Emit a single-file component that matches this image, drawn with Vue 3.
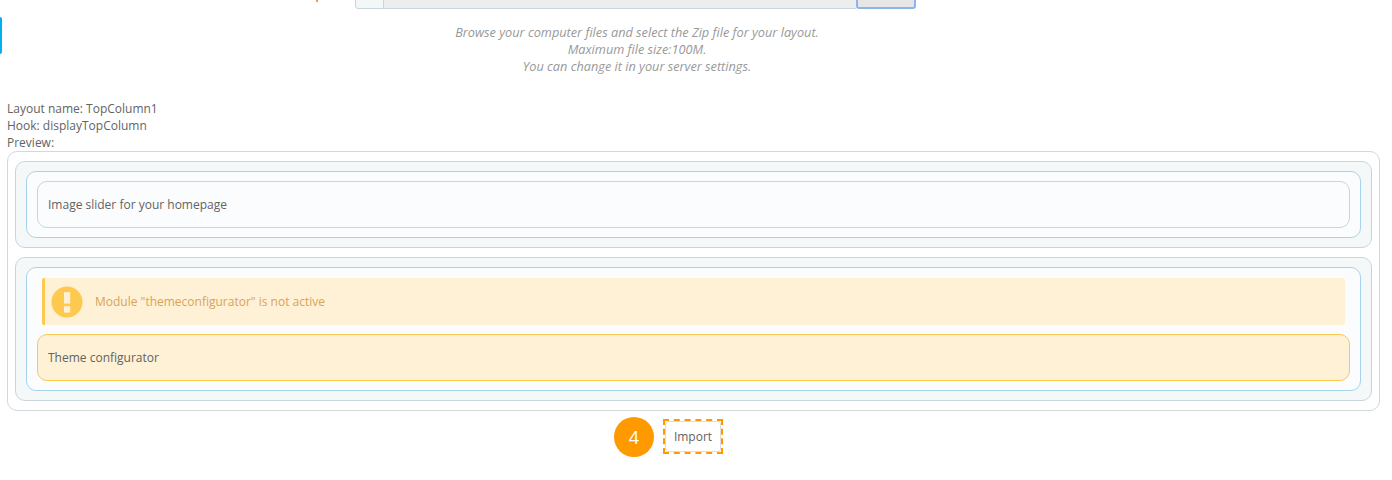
<template>
  <div class="page">
    <i class="side-tab"></i>
    <section class="upload">
      <div class="label-row">
        <span class="mark"></span>
        <div class="input-group">
          <span class="addon"></span>
          <span class="field"><i class="tick tick-a"></i><i class="tick tick-b"></i></span>
          <span class="browse"></span>
        </div>
      </div>
      <p class="help">
        Browse your computer files and select the Zip file for your layout.<br />
        Maximum file size:100M.<br />
        You can change it in your server settings.
      </p>
    </section>

    <section class="layout-info">
      <div>Layout name: TopColumn1</div>
      <div>Hook: displayTopColumn</div>
      <div>Preview:</div>
    </section>

    <section class="preview">
      <div class="hook">
        <div class="column">
          <div class="module">Image slider for your homepage</div>
        </div>
      </div>
      <div class="hook">
        <div class="column">
          <div class="alert">
            <svg class="alert-icon" viewBox="0 0 32 32" aria-hidden="true">
              <circle cx="16" cy="16" r="15.5" fill="#fdc94f" />
              <rect x="13" y="6.2" width="6.2" height="11.4" fill="#fef1d5" />
              <rect x="13" y="20.2" width="6.2" height="6.4" fill="#fef1d5" />
            </svg>
            <span>Module "themeconfigurator" is not active</span>
          </div>
          <div class="module module-warn">Theme configurator</div>
        </div>
      </div>
    </section>

    <section class="actions">
      <span class="step">4</span>
      <span class="import-frame">
        <button class="import" type="button">Import</button>
      </span>
    </section>
  </div>
</template>

<script setup>
</script>

<style>
html, body { margin: 0; background: #fff; overflow: hidden; }
</style>

<style scoped>
.page {
  position: relative;
  height: 480px;
  overflow: hidden;
  font-family: "Open Sans", sans-serif;
  font-size: 12px;
  line-height: 17px;
  color: #636363;
}
.side-tab {
  position: absolute;
  left: 0;
  top: 17px;
  width: 2px;
  height: 37px;
  background: #00aff0;
  border-radius: 0 2px 2px 0;
}
.upload { margin-top: -25px; }
.label-row {
  display: flex;
  height: 34px;
  padding-left: 355px;
  position: relative;
}
.mark {
  position: absolute;
  left: 316px;
  top: 23px;
  width: 2px;
  height: 4px;
  background: #e9a23b;
}
.input-group {
  display: flex;
  width: 561px;
  height: 34px;
  box-sizing: border-box;
}
.addon {
  width: 29px;
  box-sizing: border-box;
  background: #f3f7f8;
  border: 1px solid #c7d6db;
  border-radius: 0 0 0 3px;
}
.field {
  position: relative;
  flex: 1;
  background: #ededed;
  border-bottom: 1px solid #c7d6db;
}
.tick {
  position: absolute;
  top: 23px;
  width: 1px;
  height: 2px;
  background: #7a74c9;
}
.tick-a { left: 24px; }
.tick-b { left: 94px; }
.browse {
  width: 60px;
  box-sizing: border-box;
  background: #e6e6e6;
  border: 2px solid #8eb4ec;
  border-radius: 0 0 3px 3px;
}
.help {
  margin: 15px 0 0;
  padding-right: 118px;
  text-align: center;
  font-style: italic;
  font-size: 12.73px;
  color: #999;
}
.layout-info { margin: 25px 0 0 7px; }
.preview {
  margin: 0 12px 0 7px;
  height: 260px;
  box-sizing: border-box;
  border: 1px solid #d3d8db;
  border-radius: 10px;
  padding: 9px 7px;
  display: flex;
  flex-direction: column;
  gap: 9px;
}
.hook {
  background: #f5f8f9;
  border: 1px solid #c7d6db;
  border-radius: 10px;
  padding: 9px 10px;
}
.column {
  background: #fbfcfe;
  border: 1px solid #a6d3ec;
  border-radius: 10px;
  padding: 9px 10px;
  display: flex;
  flex-direction: column;
  gap: 9px;
}
.module {
  height: 47px;
  box-sizing: border-box;
  border: 1px solid #c7d6db;
  border-radius: 10px;
  padding: 0 10px;
  display: flex;
  align-items: center;
}
.module-warn {
  background: #fef1d5;
  border-color: #fcc94f;
}
.alert {
  height: 47px;
  margin: 1px 5px 0;
  box-sizing: border-box;
  background: #fef1d5;
  border-left: 3px solid #fdc94f;
  border-radius: 2px;
  padding-left: 6px;
  display: flex;
  align-items: center;
  gap: 12px;
  color: #d9a35a;
}
.alert-icon {
  width: 32px;
  height: 32px;
  flex: none;
}
.actions {
  margin-top: 6px;
  display: flex;
  align-items: center;
  justify-content: center;
  gap: 9px;
  padding-right: 55px;
}
.step {
  width: 40px;
  height: 40px;
  border-radius: 50%;
  background: #ff9900;
  color: #fff;
  font-size: 18px;
  display: flex;
  align-items: center;
  justify-content: center;
}
.import-frame {
  display: flex;
  border: 2px dashed #ff9900;
  margin-bottom: 1px;
}
.import {
  width: 56px;
  height: 31px;
  box-sizing: border-box;
  font: inherit;
  color: #636363;
  background: #fff;
  border: 1px solid #ddd;
  border-radius: 3px;
  padding: 0;
}
</style>
